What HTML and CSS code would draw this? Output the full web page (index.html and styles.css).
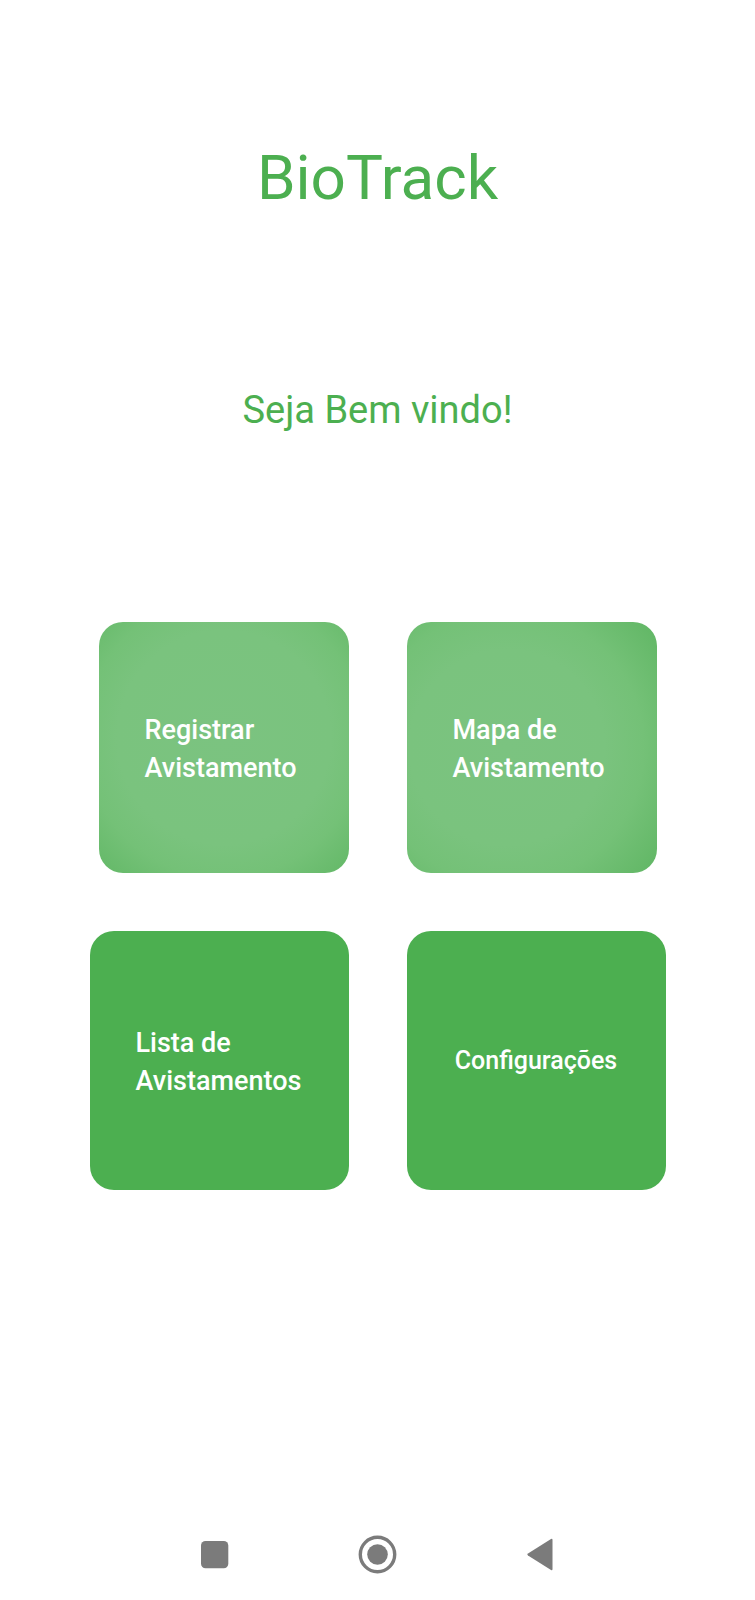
FILE: index.html
```html
<!DOCTYPE html>
<html lang="pt-BR">
<head>
<meta charset="utf-8">
<meta name="viewport" content="width=device-width, initial-scale=1">
<title>BioTrack</title>
<link rel="stylesheet" href="styles.css">
</head>
<body>
<main class="home">
  <h1 class="title">BioTrack</h1>
  <p class="welcome">Seja Bem vindo!</p>
  <div class="menu">
    <div class="column column-left">
      <button class="tile tile-small tile-pressed" type="button">Registrar<br>Avistamento</button>
      <button class="tile" type="button">Lista de<br>Avistamentos</button>
    </div>
    <div class="column">
      <button class="tile tile-small tile-pressed tile-pressed-left" type="button">Mapa de<br>Avistamento</button>
      <button class="tile tile-compact" type="button">Configurações</button>
    </div>
  </div>
</main>
<nav class="navbar" aria-label="Sistema">
  <button class="nav-button" type="button" aria-label="Recentes"><svg width="40" height="40" viewBox="0 0 40 40"><rect x="6" y="6" width="27.300" height="27.300" rx="4.500"/></svg></button>
  <button class="nav-button" type="button" aria-label="Início"><svg width="40" height="40" viewBox="0 0 40 40"><circle cx="19.500" cy="19.500" r="17.200" fill="none" stroke="#7b7b7b" stroke-width="3.400"/><circle cx="19.500" cy="19.500" r="10.300"/></svg></button>
  <button class="nav-button" type="button" aria-label="Voltar"><svg width="40" height="40" viewBox="0 0 40 40"><path d="M7 18.500 30 4Q31.500 3.200 31.500 5V34Q31.500 35.800 30 35L7 20.500Q5.500 19.500 7 18.500Z"/></svg></button>
</nav>
</body>
</html>
```
FILE: styles.css
```css
* {
  box-sizing: border-box;
}

body {
  display: flex;
  flex-direction: column;
  min-height: 100vh;
  margin: 0;
  background: #fff;
  color: #4caf50;
  font-family: Roboto, "Liberation Sans", sans-serif;
}

.home {
  flex: 1;
  padding-top: 142px;
  text-align: center;
}

.title,
.welcome {
  margin: 0;
  font-weight: 400;
}

.title {
  font-size: 62px;
  line-height: 72px;
}

.welcome {
  margin-top: 172px;
  font-size: 38px;
  line-height: 48px;
}

.menu {
  display: flex;
  justify-content: center;
  gap: 58px;
  margin-top: 188px;
}

.column {
  display: flex;
  flex-direction: column;
  align-items: flex-start;
  gap: 58px;
}

.column-left {
  align-items: flex-end;
}

.tile {
  width: 259px;
  height: 259px;
  padding: 2px 0 0 46px;
  border: 0;
  border-radius: 24px;
  background: #4caf50;
  color: #fff;
  font-family: inherit;
  font-size: 27px;
  font-weight: 500;
  line-height: 38px;
  text-align: left;
}

.tile-small {
  width: 250px;
  height: 251px;
}

.tile-pressed {
  background: radial-gradient(circle at 50% 46%, #7bc380 0%, #7ac37e 58%, #74c177 76%, #63b867 100%);
}

.tile-pressed-left {
  background: radial-gradient(circle at 40% 50%, #7bc380 0%, #7ac37e 50%, #74c177 70%, #60b664 100%);
}

.tile-compact {
  padding: 0;
  font-size: 25px;
  text-align: center;
}

.navbar {
  display: flex;
  justify-content: center;
  gap: 123px;
  padding-bottom: 25px;
}

.nav-button {
  width: 40px;
  height: 40px;
  padding: 0;
  border: 0;
  background: none;
}

.nav-button svg {
  display: block;
  fill: #7b7b7b;
}
```
